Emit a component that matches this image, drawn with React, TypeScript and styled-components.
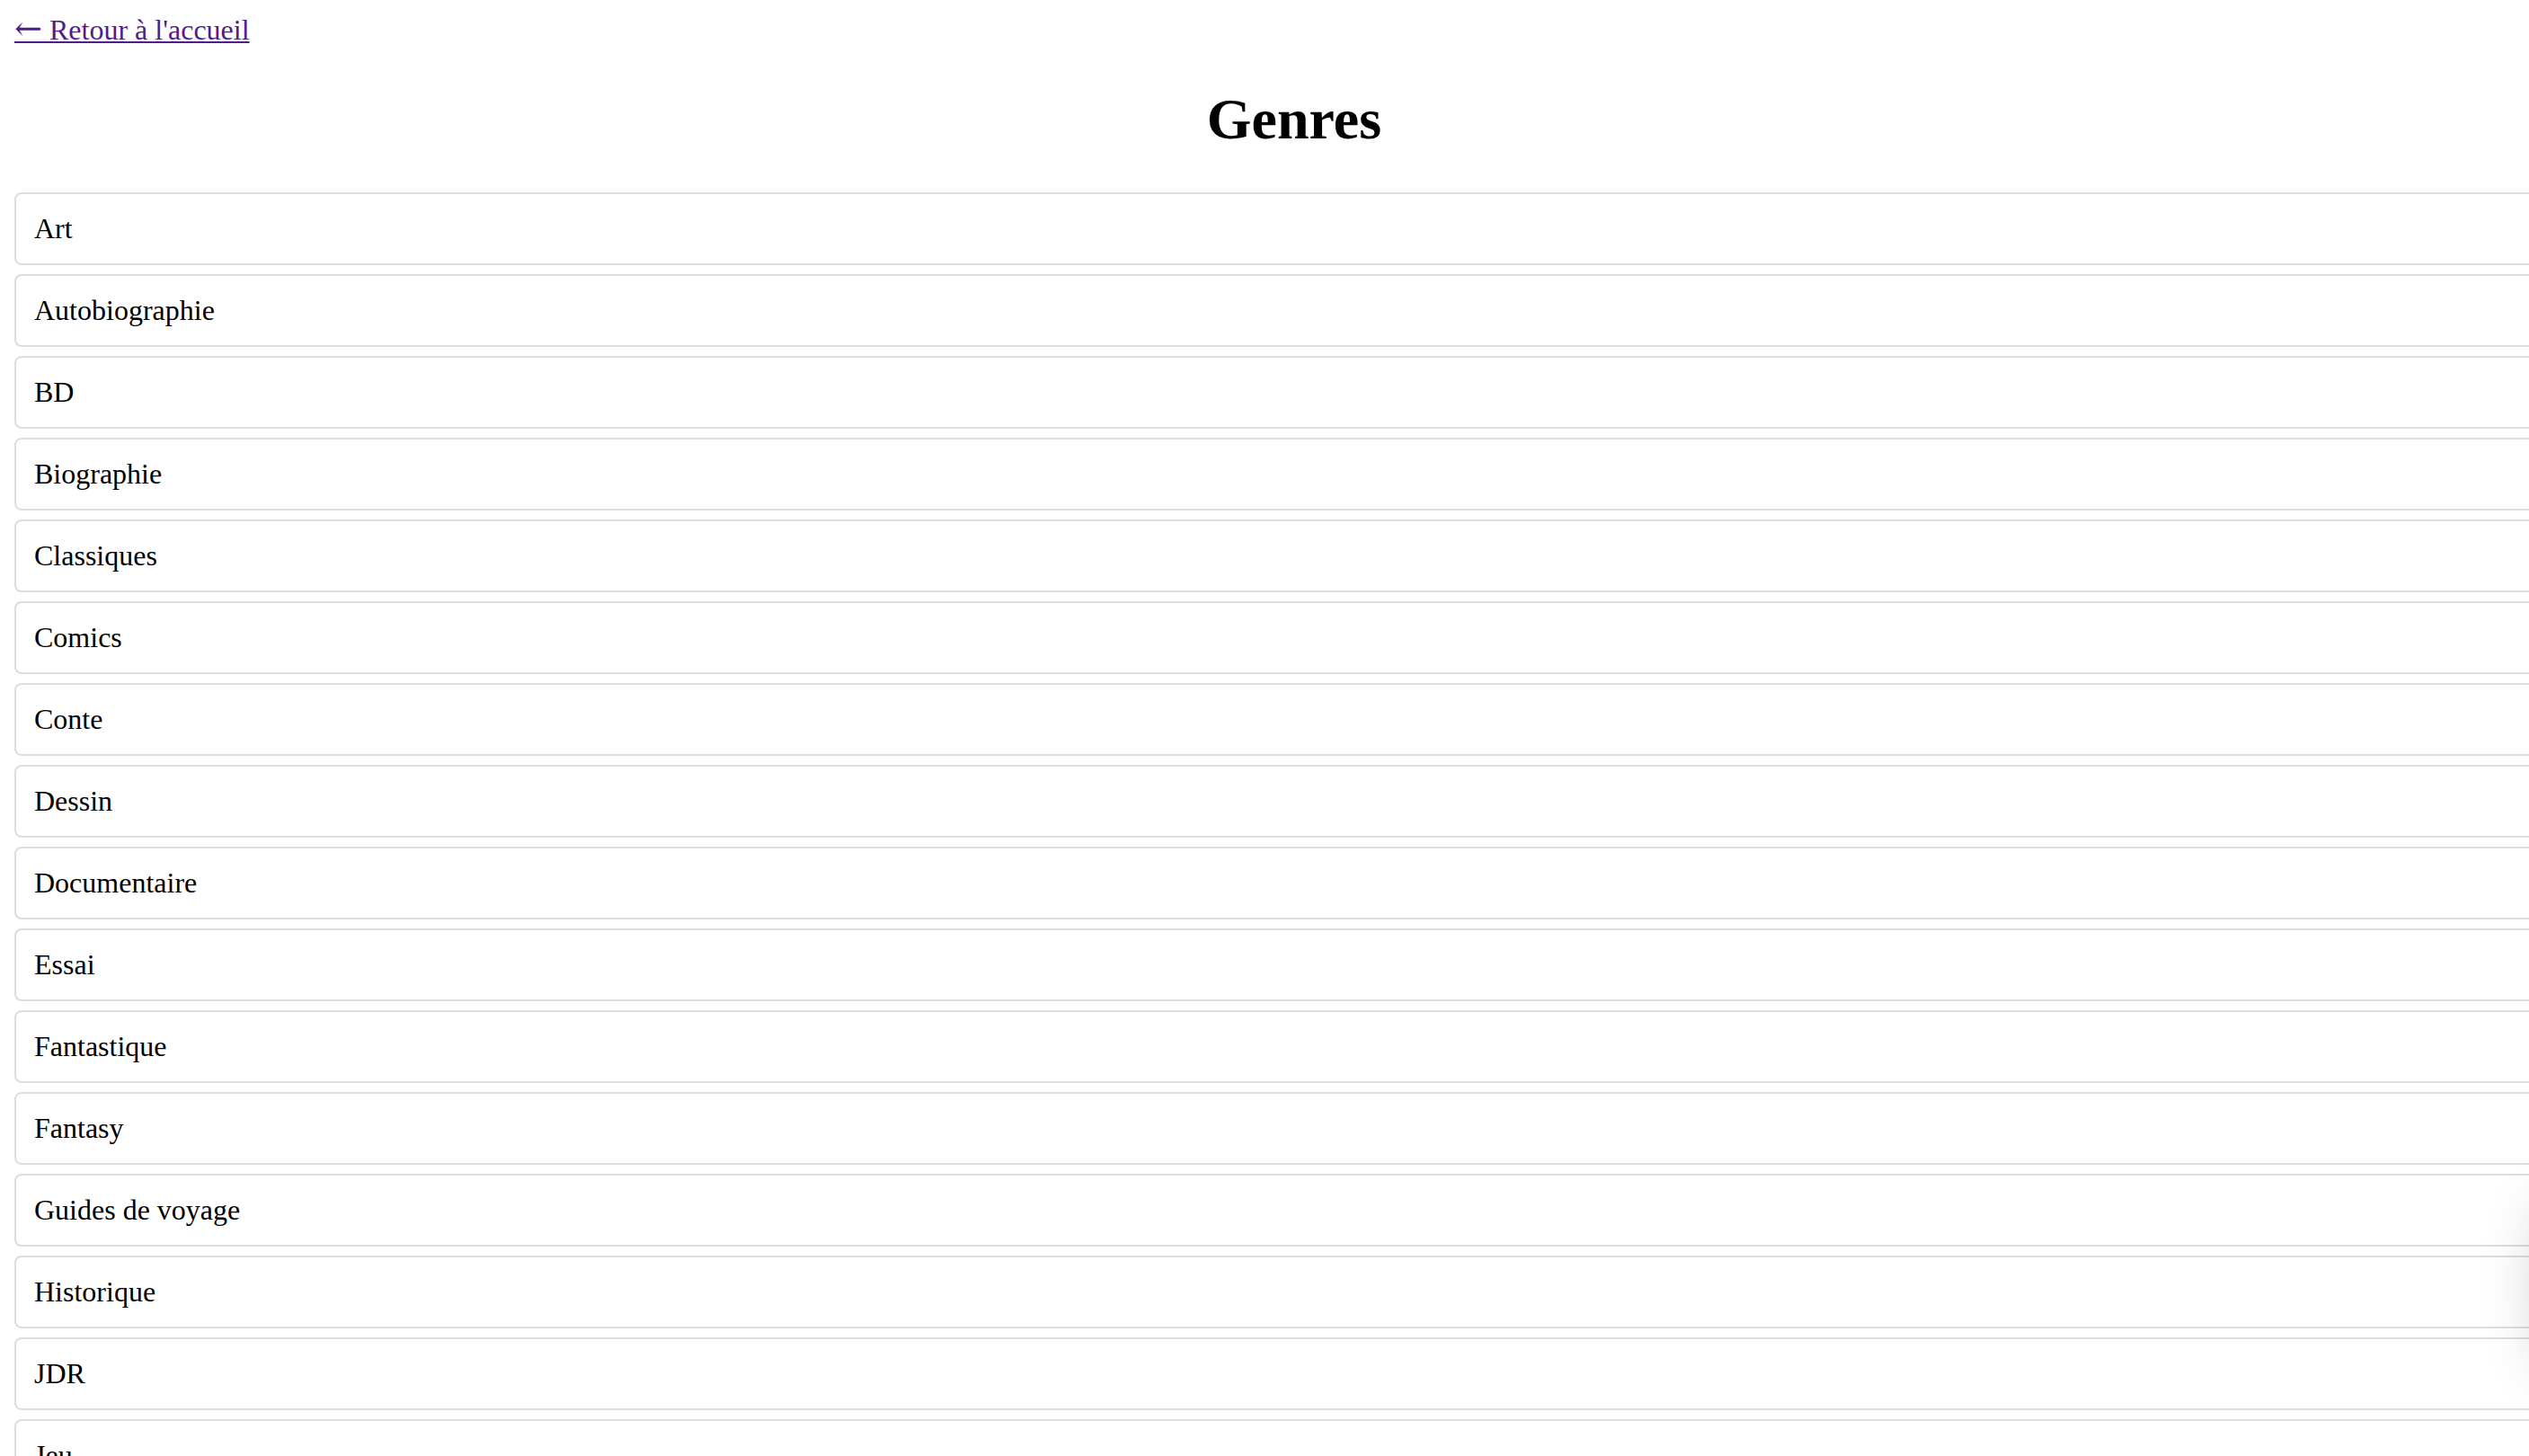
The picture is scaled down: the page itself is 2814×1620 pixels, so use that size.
import React from "react";
import styled, { createGlobalStyle } from "styled-components";

const GlobalStyle = createGlobalStyle`
  html, body {
    margin: 0;
    padding: 0;
    overflow: hidden;
    background: #fff;
  }
  body {
    font-family: "Liberation Serif", "Times New Roman", serif;
    font-size: 32px;
    color: #000;
  }
`;

const Frame = styled.div`
  width: 2814px;
  height: 1620px;
  overflow: hidden;
  position: relative;
`;

const Page = styled.div`
  width: 2848px;
  padding: 15px 16px 16px;
`;

const BackLink = styled.a`
  color: #551a8b;
  text-decoration: underline;
  text-decoration-thickness: 2px;
  text-underline-offset: 2px;
  line-height: normal;
`;

const Arrow = styled.span`
  font-family: "DejaVu Serif", serif;
  font-size: 37px;
  line-height: 0;
`;

const Title = styled.h1`
  font-size: 64px;
  font-weight: bold;
  text-align: center;
  margin: 43.5px 0 44.5px;
  line-height: normal;
`;

const List = styled.ul`
  list-style: none;
  margin: 0;
  padding: 0;
  display: flex;
  flex-direction: column;
  gap: 10px;
`;

const Item = styled.li`
  border: 2px solid #dddddd;
  border-radius: 8px;
  padding: 20px;
  line-height: 37px;
  background: #fff;
`;

const EdgeShadow = styled.div`
  position: absolute;
  top: 1345px;
  right: -70px;
  width: 40px;
  height: 170px;
  border-radius: 50%;
  box-shadow: 0 0 70px 14px rgba(0, 0, 0, 0.24);
  pointer-events: none;
`;

const genres = [
  "Art",
  "Autobiographie",
  "BD",
  "Biographie",
  "Classiques",
  "Comics",
  "Conte",
  "Dessin",
  "Documentaire",
  "Essai",
  "Fantastique",
  "Fantasy",
  "Guides de voyage",
  "Historique",
  "JDR",
  "Jeu",
  "Jeunesse",
  "Manga",
  "Policier",
];

export default function App() {
  return (
    <>
      <GlobalStyle />
      <Frame>
        <Page>
          <BackLink href="#">
            <Arrow>←</Arrow> Retour à l'accueil
          </BackLink>
          <Title>Genres</Title>
          <List>
            {genres.map((g) => (
              <Item key={g}>{g}</Item>
            ))}
          </List>
        </Page>
        <EdgeShadow />
      </Frame>
    </>
  );
}
